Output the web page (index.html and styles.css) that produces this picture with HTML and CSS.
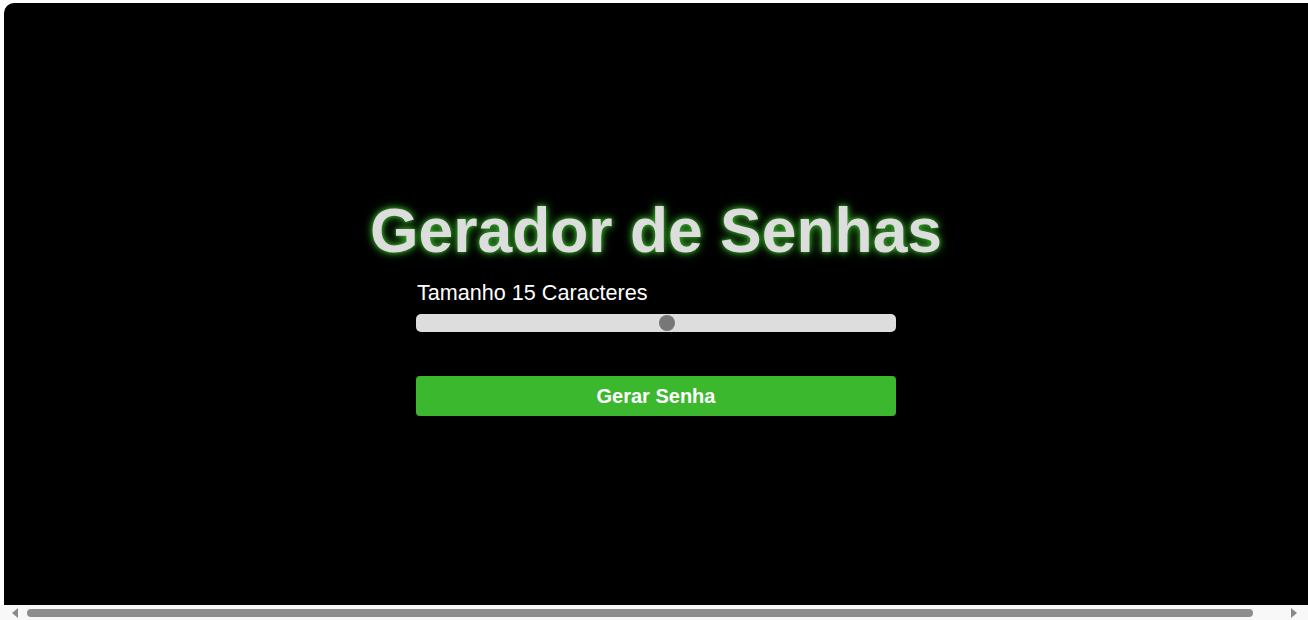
FILE: index.html
```html
<!DOCTYPE html>
<html lang="pt-BR">
<head>
<meta charset="utf-8">
<title>Gerador de Senhas</title>
<link rel="stylesheet" href="styles.css">
</head>
<body>
<div class="page">
  <main class="app">
    <h1 class="title">Gerador de Senhas</h1>
    <div class="controls">
      <label class="label" for="size">Tamanho 15 Caracteres</label>
      <input class="slider" id="size" type="range" min="4" max="25" value="15">
      <button class="btn" type="button">Gerar Senha</button>
    </div>
  </main>
</div>
<div class="hscroll" aria-hidden="true">
  <span class="arrow arrow-left"></span>
  <span class="thumb"></span>
  <span class="arrow arrow-right"></span>
</div>
</body>
</html>
```
FILE: styles.css
```css
html, body {
  margin: 0;
  padding: 0;
  background: #ffffff;
  overflow: hidden;
}
.page {
  width: 1304px;
  padding: 3px 0 0 4px;
}
.app {
  width: 1304px;
  height: 602px;
  background: #000000;
  border-top-left-radius: 10px;
  display: flex;
  flex-direction: column;
  align-items: center;
  justify-content: center;
  font-family: "Liberation Sans", Arial, sans-serif;
}
.title {
  margin: 0;
  padding-top: 3px;
  font-size: 62.4px;
  font-weight: 700;
  line-height: 72px;
  color: #dddddd;
  text-shadow: 0 0 10px rgba(60, 184, 46, 1), 0 0 4px rgba(60, 184, 46, 0.7);
}
.controls {
  width: 480px;
  display: flex;
  flex-direction: column;
  margin-top: 14px;
}
.label {
  color: #ffffff;
  font-size: 21.6px;
  line-height: 24px;
  padding-left: 1px;
}
.slider {
  -webkit-appearance: none;
  appearance: none;
  width: 480px;
  height: 18px;
  margin: 9px 0 0 0;
  background: #dddddd;
  border-radius: 5px;
  outline: none;
}
.slider::-webkit-slider-thumb {
  -webkit-appearance: none;
  appearance: none;
  width: 16px;
  height: 16px;
  border-radius: 50%;
  background: #777777;
  cursor: pointer;
}
.btn {
  margin-top: 44px;
  height: 40px;
  width: 480px;
  border: none;
  border-radius: 4px;
  background: #3cb82e;
  color: #ffffff;
  font-family: "Liberation Sans", Arial, sans-serif;
  font-size: 20px;
  font-weight: 700;
  cursor: pointer;
}
.hscroll {
  width: 1308px;
  height: 15px;
  background: #f8f8f8;
  display: flex;
  align-items: center;
  box-sizing: border-box;
  padding: 0 10px 0 12px;
}
.arrow {
  width: 0;
  height: 0;
  border-top: 5px solid transparent;
  border-bottom: 5px solid transparent;
}
.arrow-left {
  border-right: 6px solid #8a8a8a;
}
.arrow-right {
  border-left: 6px solid #8a8a8a;
  margin-left: 38px;
}
.thumb {
  width: 1226px;
  height: 8px;
  margin-left: 9px;
  border-radius: 4px;
  background: #8e8e8e;
}
```
